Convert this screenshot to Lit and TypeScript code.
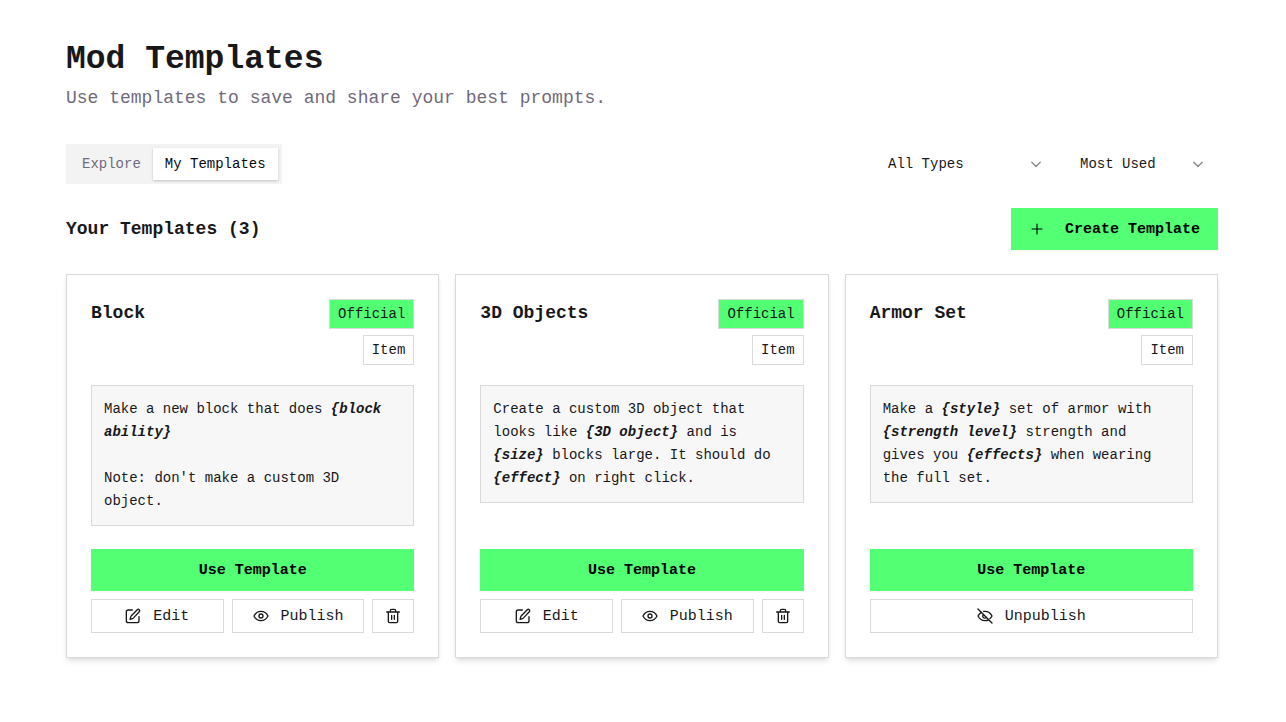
import { LitElement, html, css, svg } from "lit";
import { customElement, property, state } from "lit/decorators.js";

type Part = string | { v: string };

interface Template {
  title: string;
  body: Part[];
  published: boolean;
}

const templates: Template[] = [
  {
    title: "Block",
    body: ["Make a new block that does ", { v: "block ability" }, "\n\nNote: don't make a custom 3D object."],
    published: false,
  },
  {
    title: "3D Objects",
    body: [
      "Create a custom 3D object that looks like ", { v: "3D object" }, " and is ", { v: "size" },
      " blocks large. It should do ", { v: "effect" }, " on right click.",
    ],
    published: false,
  },
  {
    title: "Armor Set",
    body: [
      "Make a ", { v: "style" }, " set of armor with ", { v: "strength level" },
      " strength and gives you ", { v: "effects" }, " when wearing the full set.",
    ],
    published: true,
  },
];

const stroked = (paths: unknown) => html`<svg class="icon" viewBox="0 0 24 24" width="16" height="16"
  fill="none" stroke="currentColor" stroke-width="2" stroke-linecap="round" stroke-linejoin="round"
  aria-hidden="true">${paths}</svg>`;

const icons = {
  edit: stroked(svg`<path d="M11 3H5a3 3 0 0 0-3 3v13a3 3 0 0 0 3 3h13a3 3 0 0 0 3-3v-6"/><path d="M18.400 2.600a2.100 2.100 0 0 1 3 3l-8.600 9.200a4 4 0 0 1-1.600 1L7.500 17l1.100-3.700a4 4 0 0 1 1-1.600z"/>`),
  eye: stroked(svg`<path d="M1.500 12S5 5 12 5s10.500 7 10.500 7S19 19 12 19 1.500 12 1.500 12z"/><circle cx="12" cy="12" r="3"/>`),
  eyeOff: stroked(svg`<path d="M10 5.200A10 10 0 0 1 12 5c7 0 10.500 7 10.500 7a17 17 0 0 1-3 3.800"/><path d="M6.600 6.600A16 16 0 0 0 1.500 12s3.500 7 10.500 7a10 10 0 0 0 5.400-1.600"/><path d="M9.900 9.900a3 3 0 1 0 4.200 4.200"/><path d="M1.500 1.500l21 21"/>`),
  trash: stroked(svg`<path d="M2.500 6h19M19 6v14a2 2 0 0 1-2 2H7a2 2 0 0 1-2-2V6M8 6V4a2 2 0 0 1 2-2h4a2 2 0 0 1 2 2v2M10 11v6M14 11v6"/>`),
  plus: html`<svg class="icon" viewBox="0 0 16 16" width="16" height="16" fill="none" stroke="currentColor" stroke-width="1.1" stroke-linecap="round" aria-hidden="true"><path d="M8 3v10M3 8h10"/></svg>`,
  chevron: html`<svg class="chevron" viewBox="0 0 16 16" width="16" height="16" fill="none" stroke="currentColor" stroke-width="1.4" stroke-linecap="round" stroke-linejoin="round" aria-hidden="true"><path d="M3.800 6.200L8 10.400l4.200-4.200"/></svg>`,
};

const base = css`
  * { box-sizing: border-box; }
  h1, h2, h3, p { margin: 0; }
  button, select { font: inherit; color: inherit; border-radius: 0; }
  button { cursor: pointer; }
  .icon { flex: none; display: block; }
  .primary {
    display: flex;
    align-items: center;
    justify-content: center;
    height: 42px;
    border: 0;
    background: #53ff73;
    color: #000;
    font-size: 15px;
    font-weight: 600;
    box-shadow: 0 1px 2px rgba(0, 0, 0, 0.05);
  }
`;

@customElement("template-card")
export class TemplateCard extends LitElement {
  @property({ attribute: false }) template!: Template;

  static styles = [
    base,
    css`
      :host {
        display: flex;
        flex-direction: column;
        padding: 24px;
        box-sizing: border-box;
        background: #fff;
        border: 1px solid #dadada;
        box-shadow: 0 4px 6px -1px rgba(0, 0, 0, 0.1), 0 2px 4px -2px rgba(0, 0, 0, 0.1);
      }
      .head { display: flex; justify-content: space-between; align-items: flex-start; gap: 8px; }
      h3 { font-size: 18px; line-height: 28px; font-weight: 600; }
      .badges { display: flex; flex-direction: column; align-items: flex-end; gap: 6px; }
      .badge {
        padding: 4px 8px;
        border: 1px solid #dadada;
        font-size: 14px;
        line-height: 20px;
        font-weight: 500;
      }
      .official { background: #53ff73; }
      .prompt {
        margin-top: 20px;
        padding: 12px 20px 12px 12px;
        border: 1px solid #dadada;
        background: #f7f7f7;
        font-size: 14px;
        line-height: 23px;
        white-space: pre-wrap;
      }
      em { font-weight: 600; }
      .foot { display: flex; flex-direction: column; gap: 8px; margin-top: auto; padding-top: 23px; }
      .actions { display: flex; gap: 8px; }
      .outline {
        flex: 1 1 0;
        display: flex;
        align-items: center;
        justify-content: center;
        gap: 12px;
        height: 34px;
        padding: 0;
        border: 1px solid #dadada;
        background: #fff;
        font-size: 15px;
      }
      .square { flex: 0 0 42px; }
    `,
  ];

  render() {
    const t = this.template;
    return html`
      <div class="head">
        <h3>${t.title}</h3>
        <div class="badges"><span class="badge official">Official</span><span class="badge">Item</span></div>
      </div>
      <p class="prompt">${t.body.map((p) => (typeof p === "string" ? p : html`<em>{${p.v}}</em>`))}</p>
      <div class="foot">
        <button class="primary">Use Template</button>
        <div class="actions">
          ${t.published
            ? html`<button class="outline">${icons.eyeOff}<span>Unpublish</span></button>`
            : html`<button class="outline">${icons.edit}<span>Edit</span></button>
                <button class="outline">${icons.eye}<span>Publish</span></button>
                <button class="outline square" aria-label="Delete">${icons.trash}</button>`}
        </div>
      </div>
    `;
  }
}

@customElement("app-root")
export class AppRoot extends LitElement {
  @state() private tab = "My Templates";

  static styles = [
    base,
    css`
      :host {
        display: block;
        min-height: 100vh;
        box-sizing: border-box;
        padding: 40px 68px 64px 66px;
        background: #fff;
        color: #18181b;
        font-family: "Liberation Mono", monospace;
        font-size: 14px;
      }
      h1 { font-size: 33px; line-height: 40px; font-weight: 700; }
      .lead { margin-top: 4px; font-size: 18px; line-height: 28px; color: #716a7c; }
      .toolbar { display: flex; justify-content: space-between; align-items: center; margin-top: 32px; }
      .tabs { display: flex; padding: 4px; background: #f3f3f3; }
      .tab {
        height: 32px;
        padding: 0 12px;
        border: 0;
        background: none;
        color: #716a7c;
        font-weight: 500;
      }
      .tab.active {
        background: #fff;
        color: #09090b;
        box-shadow: 0 1px 3px rgba(0, 0, 0, 0.1), 0 1px 2px rgba(0, 0, 0, 0.1);
      }
      .filters { display: flex; gap: 12px; }
      .select { display: grid; align-items: center; width: 180px; }
      .select.narrow { width: 150px; }
      .select > * { grid-area: 1 / 1; }
      select {
        appearance: none;
        width: 100%;
        height: 40px;
        padding: 0 32px 0 12px;
        border: 0;
        background: transparent;
      }
      .chevron { justify-self: end; margin-right: 12px; opacity: 0.5; pointer-events: none; }
      .section { display: flex; justify-content: space-between; align-items: center; margin-top: 24px; }
      h2 { font-size: 18px; line-height: 28px; font-weight: 600; }
      .create { gap: 20px; padding: 0 18px; }
      .grid { display: grid; grid-template-columns: repeat(3, minmax(0, 1fr)); gap: 16px; margin-top: 24px; }
    `,
  ];

  render() {
    return html`
      <header>
        <h1>Mod Templates</h1>
        <p class="lead">Use templates to save and share your best prompts.</p>
      </header>
      <div class="toolbar">
        <div class="tabs" role="tablist">
          ${["Explore", "My Templates"].map(
            (name) => html`<button
              role="tab"
              class="tab ${this.tab === name ? "active" : ""}"
              aria-selected=${this.tab === name}
              @click=${() => (this.tab = name)}
            >${name}</button>`
          )}
        </div>
        <div class="filters">
          <div class="select">
            <select aria-label="Type"><option>All Types</option></select>${icons.chevron}
          </div>
          <div class="select narrow">
            <select aria-label="Sort by"><option>Most Used</option></select>${icons.chevron}
          </div>
        </div>
      </div>
      <div class="section">
        <h2>Your Templates (${templates.length})</h2>
        <button class="primary create">${icons.plus}<span>Create Template</span></button>
      </div>
      <main class="grid">
        ${templates.map((t) => html`<template-card .template=${t}></template-card>`)}
      </main>
    `;
  }
}
